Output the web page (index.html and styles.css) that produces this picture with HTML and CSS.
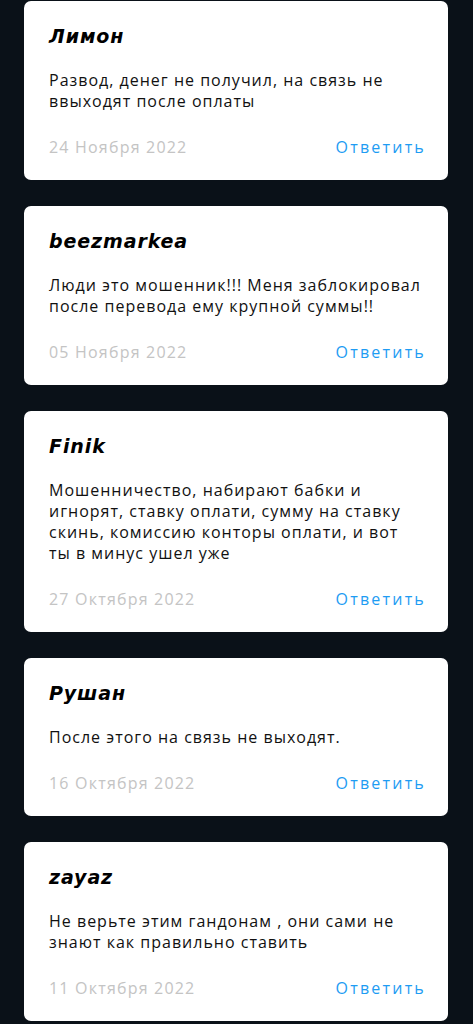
FILE: index.html
```html
<!DOCTYPE html>
<html lang="ru">
<head>
<meta charset="utf-8">
<link rel="stylesheet" href="styles.css">
</head>
<body>
<div class="list">
  <div class="card">
    <div class="name">Лимон</div>
    <div class="text">Развод, денег не получил, на связь не ввыходят после оплаты</div>
    <div class="foot"><span class="date">24 Ноября 2022</span><span class="reply">Ответить</span></div>
  </div>
  <div class="card">
    <div class="name">beezmarkea</div>
    <div class="text">Люди это мошенник!!! Меня заблокировал после перевода ему крупной суммы!!</div>
    <div class="foot"><span class="date">05 Ноября 2022</span><span class="reply">Ответить</span></div>
  </div>
  <div class="card">
    <div class="name">Finik</div>
    <div class="text">Мошенничество, набирают бабки и игнорят, ставку оплати, сумму на ставку скинь, комиссию конторы оплати, и вот ты в минус ушел уже</div>
    <div class="foot"><span class="date">27 Октября 2022</span><span class="reply">Ответить</span></div>
  </div>
  <div class="card">
    <div class="name">Рушан</div>
    <div class="text">После этого на связь не выходят.</div>
    <div class="foot"><span class="date">16 Октября 2022</span><span class="reply">Ответить</span></div>
  </div>
  <div class="card">
    <div class="name">zayaz</div>
    <div class="text">Не верьте этим гандонам , они сами не знают как правильно ставить</div>
    <div class="foot"><span class="date">11 Октября 2022</span><span class="reply">Ответить</span></div>
  </div>
</div>
</body>
</html>
```
FILE: styles.css
```css
html, body {
  margin: 0;
  padding: 0;
  background: #0a1118;
}
body {
  font-family: "Open Sans", "Noto Sans", sans-serif;
}
.list {
  display: flex;
  flex-direction: column;
  gap: 26px;
  padding: 1px 25px 0 24px;
}
.card {
  background: #ffffff;
  border-radius: 7px;
  padding: 23px 22px 23px 25px;
  display: flex;
  flex-direction: column;
}
.name {
  font-family: "DejaVu Sans", sans-serif;
  font-size: 19px;
  line-height: 24px;
  font-weight: 700;
  font-style: italic;
  color: #000;
  letter-spacing: 0.9px;
}
.text {
  margin-top: 22px;
  margin-right: 3px;
  font-size: 16px;
  line-height: 21px;
  color: #111;
  letter-spacing: 1px;
}
.foot {
  margin-top: 25px;
  display: flex;
  justify-content: space-between;
  font-size: 16px;
  line-height: 20px;
  letter-spacing: 1.2px;
}
.date {
  color: #c4c4c4;
}
.reply {
  color: #1e9cf3;
  letter-spacing: 2.2px;
}
```
